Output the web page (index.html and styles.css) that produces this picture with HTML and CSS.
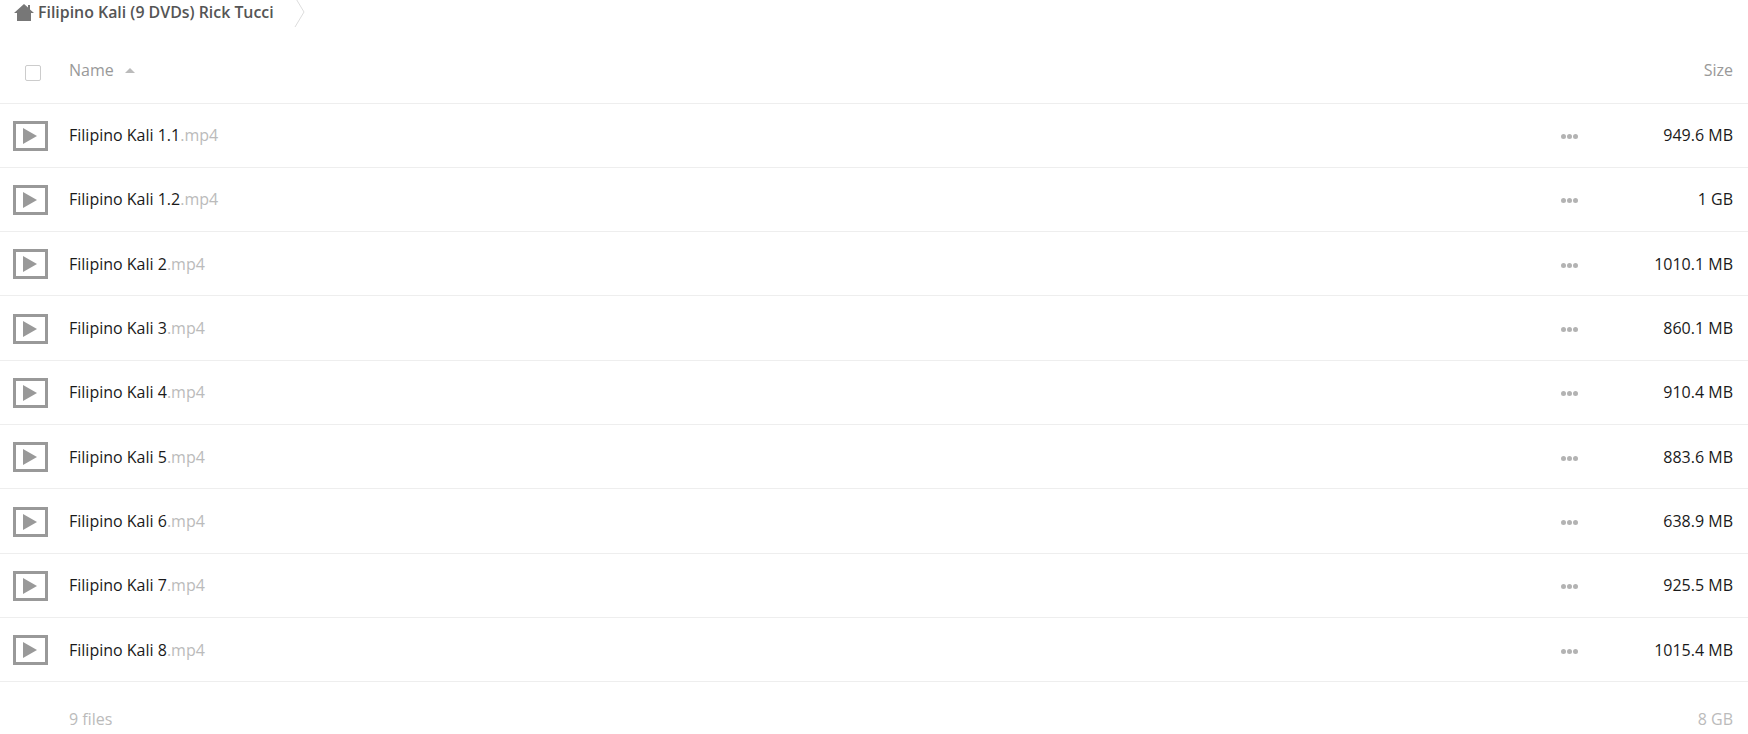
FILE: index.html
```html
<html>
<head>
<title>Filipino Kali (9 DVDs) Rick Tucci</title>
<link rel="stylesheet" href="styles.css">
</head>
<body>
<div class="crumbs">
  <svg class="home" width="20" height="18" viewBox="0 0 20 18"><path d="M10 0 L14 3.6 V1 H16 V5.4 L20 9 H17 V17 H3 V9 H0 Z" fill="#777"/></svg>
  <span class="crumb-name">Filipino Kali (9 DVDs) Rick Tucci</span>
  <svg class="crumb-sep" width="12" height="30" viewBox="0 0 12 30"><path d="M1 0 L10 15 L1 30" fill="none" stroke="#ddd"/></svg>
</div>

<div class="head">
  <div class="col-icon"><span class="check"></span></div>
  <div class="col-name">Name <span class="sort"></span></div>
  <div class="col-size">Size</div>
</div>

<div class="row">
  <div class="col-icon"><svg class="play" width="35" height="30" viewBox="0 0 35 30"><rect x="1.5" y="1.5" width="32" height="27" fill="none" stroke="#999" stroke-width="3"/><path d="M10 7 L24 15 L10 23 Z" fill="#999"/></svg></div>
  <div class="col-name">Filipino Kali 1.1<span class="ext">.mp4</span></div>
  <div class="more"><i></i><i></i><i></i></div>
  <div class="col-size">949.6 MB</div>
</div>
<div class="row">
  <div class="col-icon"><svg class="play" width="35" height="30" viewBox="0 0 35 30"><rect x="1.5" y="1.5" width="32" height="27" fill="none" stroke="#999" stroke-width="3"/><path d="M10 7 L24 15 L10 23 Z" fill="#999"/></svg></div>
  <div class="col-name">Filipino Kali 1.2<span class="ext">.mp4</span></div>
  <div class="more"><i></i><i></i><i></i></div>
  <div class="col-size">1 GB</div>
</div>
<div class="row">
  <div class="col-icon"><svg class="play" width="35" height="30" viewBox="0 0 35 30"><rect x="1.5" y="1.5" width="32" height="27" fill="none" stroke="#999" stroke-width="3"/><path d="M10 7 L24 15 L10 23 Z" fill="#999"/></svg></div>
  <div class="col-name">Filipino Kali 2<span class="ext">.mp4</span></div>
  <div class="more"><i></i><i></i><i></i></div>
  <div class="col-size">1010.1 MB</div>
</div>
<div class="row">
  <div class="col-icon"><svg class="play" width="35" height="30" viewBox="0 0 35 30"><rect x="1.5" y="1.5" width="32" height="27" fill="none" stroke="#999" stroke-width="3"/><path d="M10 7 L24 15 L10 23 Z" fill="#999"/></svg></div>
  <div class="col-name">Filipino Kali 3<span class="ext">.mp4</span></div>
  <div class="more"><i></i><i></i><i></i></div>
  <div class="col-size">860.1 MB</div>
</div>
<div class="row">
  <div class="col-icon"><svg class="play" width="35" height="30" viewBox="0 0 35 30"><rect x="1.5" y="1.5" width="32" height="27" fill="none" stroke="#999" stroke-width="3"/><path d="M10 7 L24 15 L10 23 Z" fill="#999"/></svg></div>
  <div class="col-name">Filipino Kali 4<span class="ext">.mp4</span></div>
  <div class="more"><i></i><i></i><i></i></div>
  <div class="col-size">910.4 MB</div>
</div>
<div class="row">
  <div class="col-icon"><svg class="play" width="35" height="30" viewBox="0 0 35 30"><rect x="1.5" y="1.5" width="32" height="27" fill="none" stroke="#999" stroke-width="3"/><path d="M10 7 L24 15 L10 23 Z" fill="#999"/></svg></div>
  <div class="col-name">Filipino Kali 5<span class="ext">.mp4</span></div>
  <div class="more"><i></i><i></i><i></i></div>
  <div class="col-size">883.6 MB</div>
</div>
<div class="row">
  <div class="col-icon"><svg class="play" width="35" height="30" viewBox="0 0 35 30"><rect x="1.5" y="1.5" width="32" height="27" fill="none" stroke="#999" stroke-width="3"/><path d="M10 7 L24 15 L10 23 Z" fill="#999"/></svg></div>
  <div class="col-name">Filipino Kali 6<span class="ext">.mp4</span></div>
  <div class="more"><i></i><i></i><i></i></div>
  <div class="col-size">638.9 MB</div>
</div>
<div class="row">
  <div class="col-icon"><svg class="play" width="35" height="30" viewBox="0 0 35 30"><rect x="1.5" y="1.5" width="32" height="27" fill="none" stroke="#999" stroke-width="3"/><path d="M10 7 L24 15 L10 23 Z" fill="#999"/></svg></div>
  <div class="col-name">Filipino Kali 7<span class="ext">.mp4</span></div>
  <div class="more"><i></i><i></i><i></i></div>
  <div class="col-size">925.5 MB</div>
</div>
<div class="row">
  <div class="col-icon"><svg class="play" width="35" height="30" viewBox="0 0 35 30"><rect x="1.5" y="1.5" width="32" height="27" fill="none" stroke="#999" stroke-width="3"/><path d="M10 7 L24 15 L10 23 Z" fill="#999"/></svg></div>
  <div class="col-name">Filipino Kali 8<span class="ext">.mp4</span></div>
  <div class="more"><i></i><i></i><i></i></div>
  <div class="col-size">1015.4 MB</div>
</div>

<div class="foot">
  <div class="col-icon"></div>
  <div class="col-name">9 files</div>
  <div class="col-size">8 GB</div>
</div>
</body></html>
```

FILE: styles.css
```css
html, body {
  margin: 0;
  padding: 0;
}
body {
  font-family: "Open Sans", sans-serif;
  font-size: 16px;
  color: #1a1a1a;
  background-color: #fff;
  overflow: hidden;
}
.crumbs {
  display: flex;
  align-items: center;
  height: 24px;
  padding-left: 14px;
}
.home {
  margin-top: 2px;
}
.crumb-name {
  margin-left: 4px;
  font-size: 15.9px;
  font-weight: 600;
  color: #555;
}
.crumb-sep {
  margin-left: 20px;
}
.head, .row, .foot {
  display: flex;
  align-items: center;
}
.head {
  height: 79.5px;
  padding-top: 13px;
  box-sizing: border-box;
  border-bottom: 1px solid #eee;
  color: #999;
}
.row {
  height: 64.33px;
  box-sizing: border-box;
  border-bottom: 1px solid #eee;
}
.foot {
  height: 52px;
  padding-top: 22px;
  box-sizing: border-box;
  color: #bbb;
}
.col-icon {
  width: 69px;
  padding-left: 13px;
  box-sizing: border-box;
  display: flex;
  align-items: center;
}
.play {
  margin-top: 1px;
}
.col-name {
  flex: 1;
}
.col-size {
  width: 169px;
  padding-right: 15px;
  box-sizing: border-box;
  text-align: right;
}
.check {
  width: 14px;
  height: 14px;
  margin-left: 12px;
  margin-top: 6px;
  border: 1px solid #ccc;
  border-radius: 2px;
}
.sort {
  display: inline-block;
  margin-left: 7px;
  margin-bottom: 3px;
  border-left: 5px solid transparent;
  border-right: 5px solid transparent;
  border-bottom: 5px solid #bbb;
}
.ext {
  color: #bbb;
}
.more {
  display: flex;
  gap: 1px;
  width: 18px;
  margin-top: 3px;
}
.more i {
  width: 5px;
  height: 5px;
  border-radius: 50%;
  background-color: #b3b3b3;
}
```
